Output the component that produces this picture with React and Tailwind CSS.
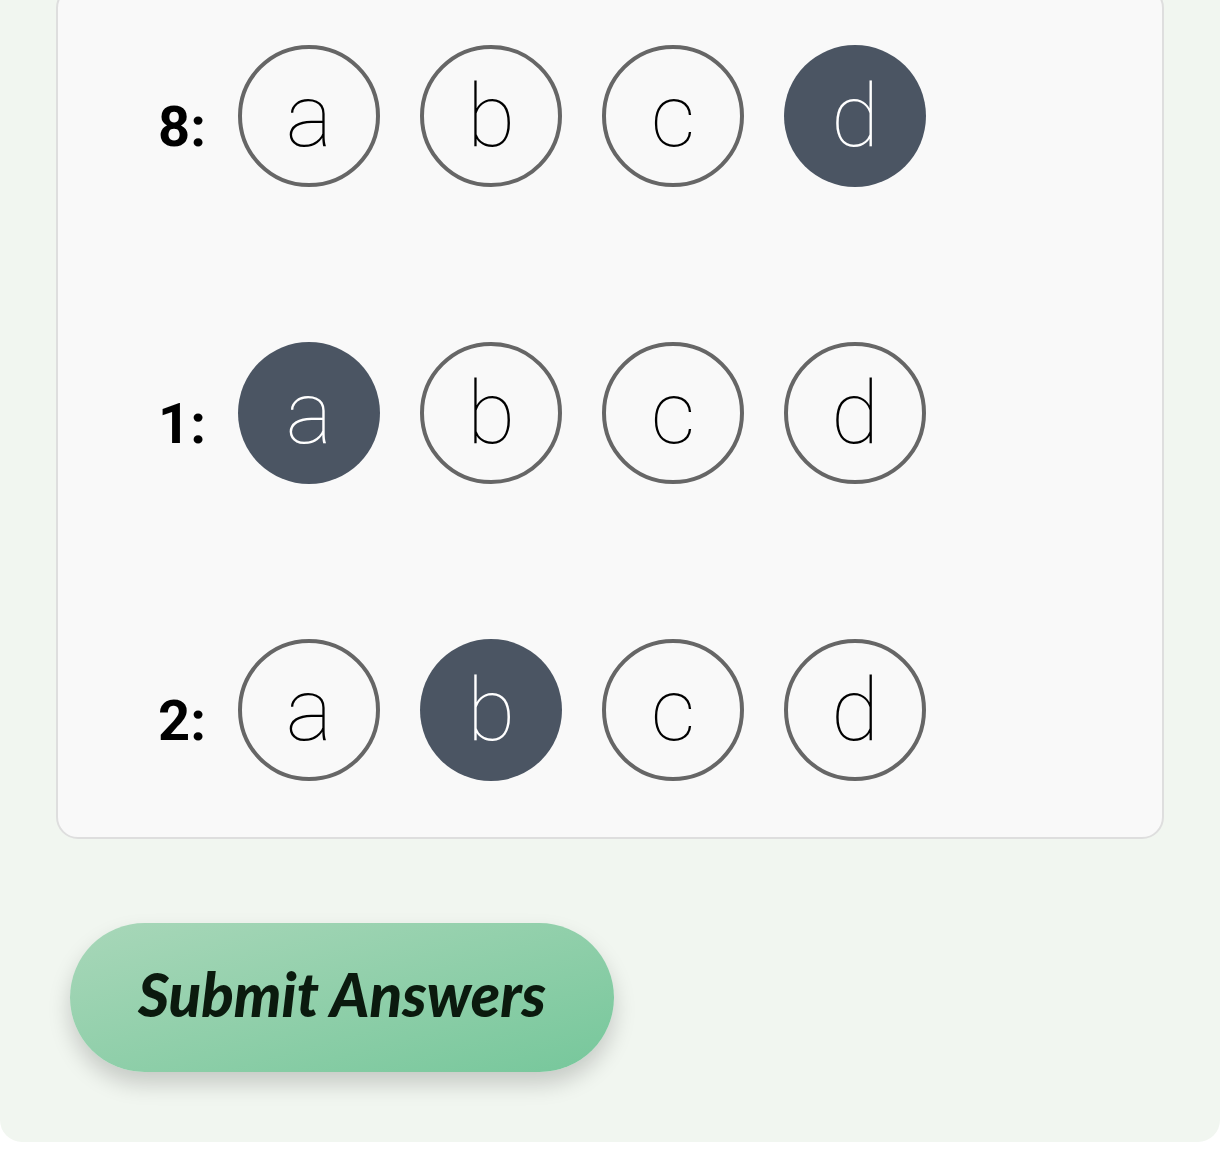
const rows = [
  { n: 8, pick: 'd' },
  { n: 1, pick: 'a' },
  { n: 2, pick: 'b' },
]
const opts = ['a', 'b', 'c', 'd']

function Bubble({ letter, on }) {
  return (
    <div
      className={
        'w-[142px] h-[142px] rounded-full flex items-center justify-center text-[88px] font-thin font-["Roboto",sans-serif] ' +
        (on ? 'bg-[#4b5563] text-white' : 'border-[4px] border-[#666666] text-black')
      }
    >
      {letter}
    </div>
  )
}

export default function App() {
  return (
    <div className="bg-white h-[1174px] overflow-hidden">
      <div className="bg-[#f1f6f0] rounded-b-[22px] px-[56px] pb-[70px]">
        {/* answer sheet */}
        <div className="-mt-[14px] pt-[57px] pb-[56px] pl-[100px] bg-[#f9f9f9] border-2 border-[#dedede] rounded-[22px] flex flex-col gap-[155px]">
          {rows.map(r => (
            <div key={r.n} className="flex items-baseline">
              <span className="w-[46px] mr-[34px] text-[56px] font-bold font-['Roboto',sans-serif] text-black">{r.n}:</span>
              <div className="flex gap-[40px]">
                {opts.map(o => <Bubble key={o} letter={o} on={o === r.pick} />)}
              </div>
            </div>
          ))}
        </div>

        <button className="mt-[84px] ml-[14px] w-[544px] h-[149px] pb-[8px] rounded-full bg-gradient-to-br from-[#a8d7b9] to-[#76c79b] shadow-[0_12px_22px_rgba(0,0,0,0.18)] text-[60px] font-black italic font-['Lato',sans-serif] text-[#0b1a0e]">
          Submit Answers
        </button>
      </div>
    </div>
  )
}
